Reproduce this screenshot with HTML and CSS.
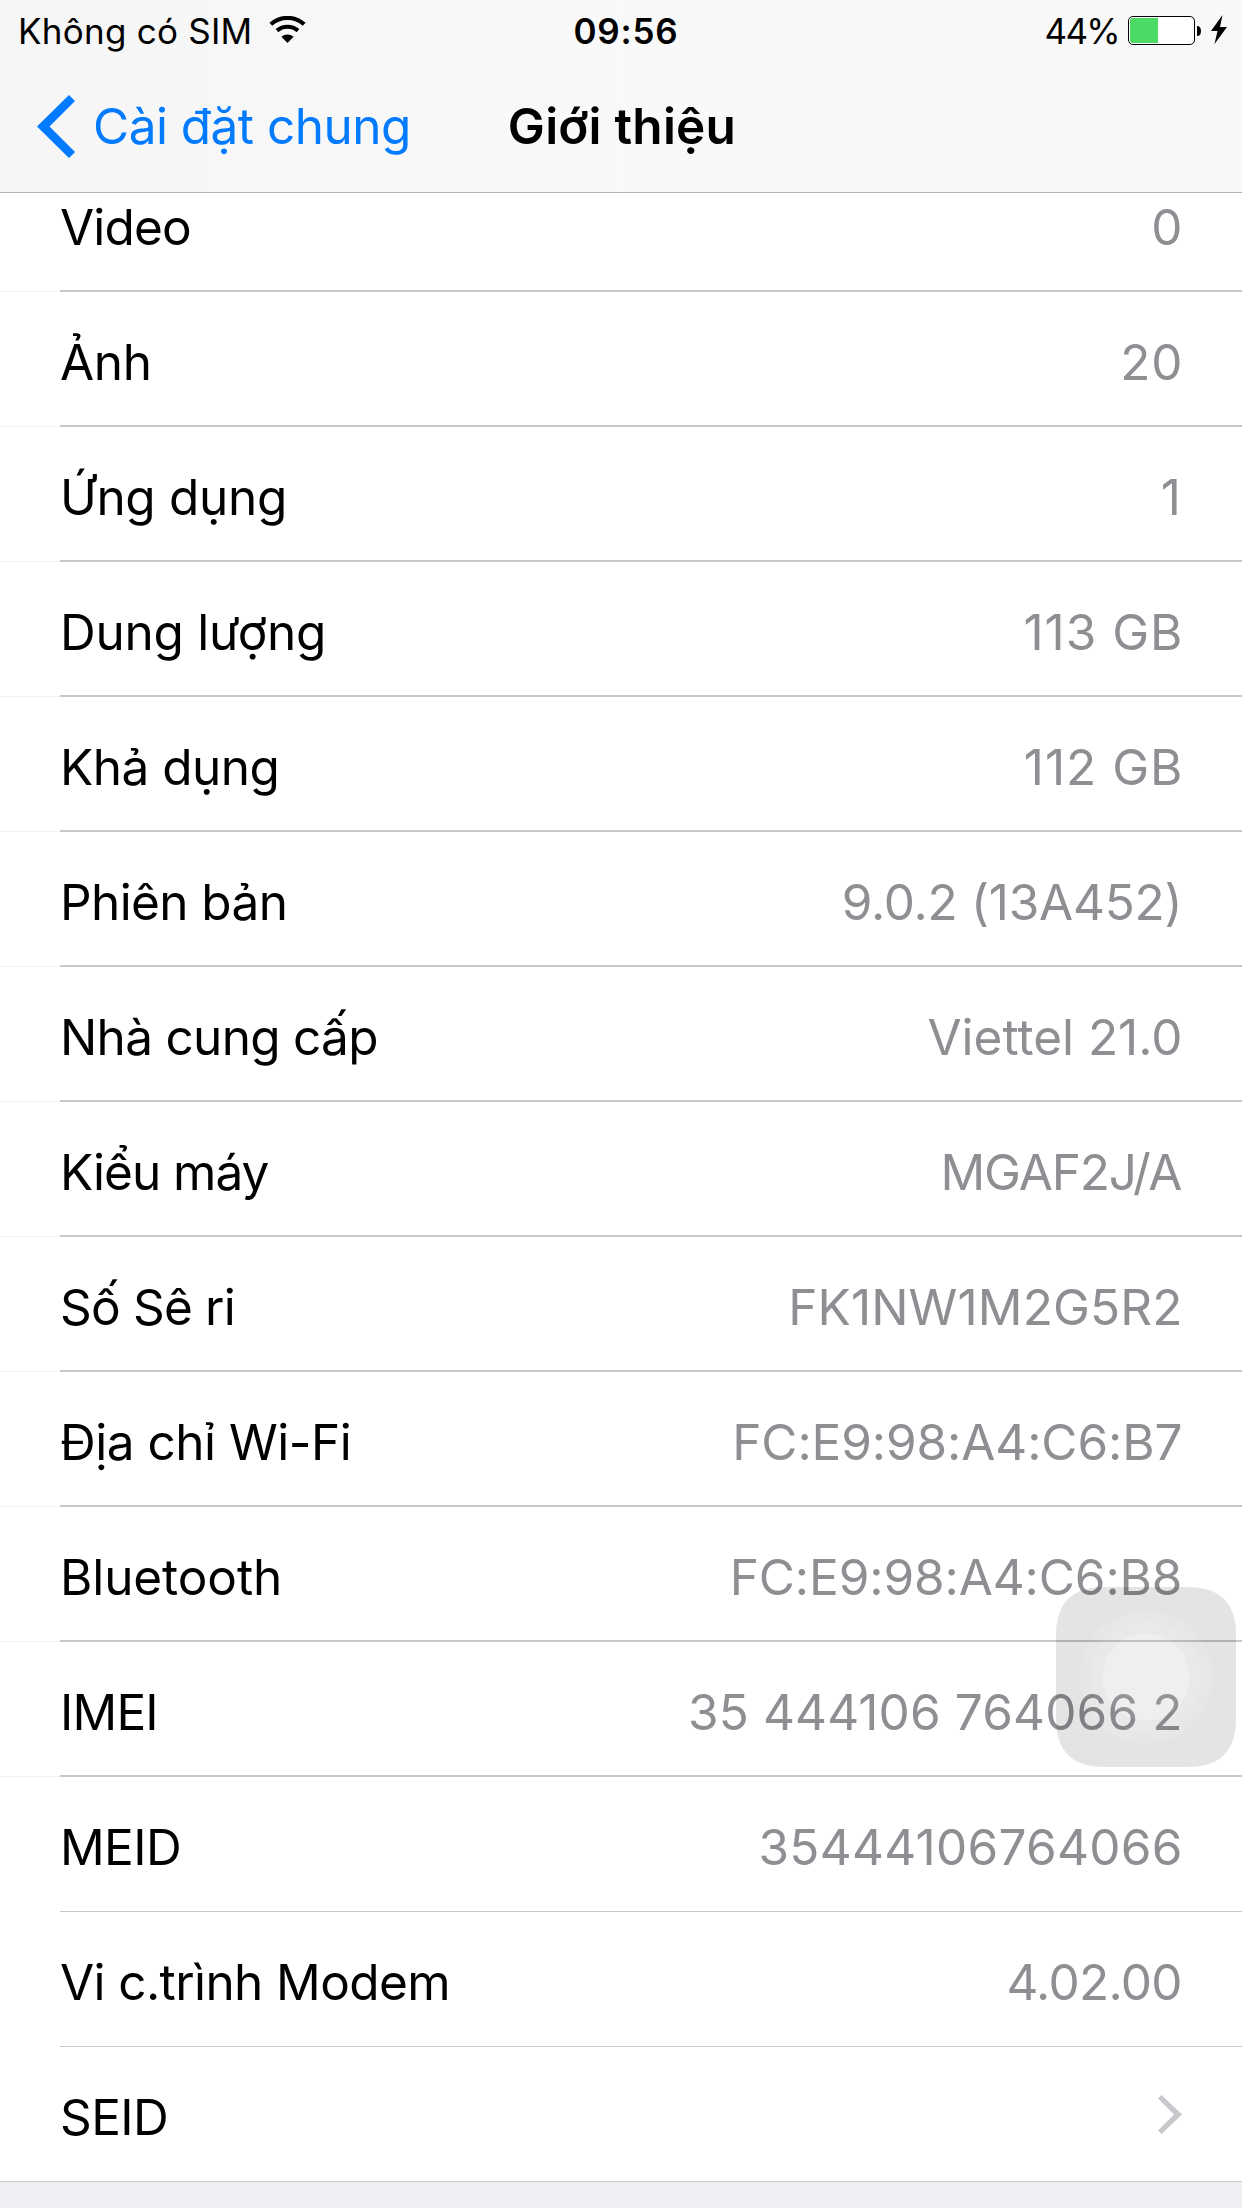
FILE: index.html
```html
<!DOCTYPE html>
<html lang="vi">
<head>
<meta charset="utf-8">
<title>Giới thiệu</title>
<link rel="stylesheet" href="styles.css">
</head>
<body>
<div class="screen">
  <header class="header">
    <div class="status">
      <div class="status-left">
        <span class="carrier">Không có SIM</span>
        <svg class="wifi" viewBox="0 0 38 28" width="38" height="28">
          <path d="M1.8 8.3A25 25 0 0 1 35.2 8.3" fill="none" stroke="#000" stroke-width="4.2"/>
          <path d="M8 14.6A16.2 16.2 0 0 1 29 14.6" fill="none" stroke="#000" stroke-width="4.2"/>
          <path d="M12.4 20.8A9.2 9.2 0 0 1 24.6 20.8L18.5 27Z"/>
        </svg>
      </div>
      <span class="time">09:56</span>
      <div class="status-right">
        <span class="percent">44%</span>
        <svg class="battery" viewBox="0 0 74 29" width="74" height="29">
          <rect x=".5" y=".5" width="66" height="28" rx="4.5" fill="#fff" stroke="#000"/>
          <path d="M5 2H30V27H5A3 3 0 0 1 2 24V5A3 3 0 0 1 5 2Z" fill="#4cd964"/>
          <path d="M69 10C71.800 10 73 12 73 15S71.800 20 69 20Z"/>
        </svg>
        <svg class="bolt" viewBox="0 0 16 29" width="16" height="29">
          <path d="M11.500 0L0 16H6.500L3.500 29L16 12H9Z"/>
        </svg>
      </div>
    </div>
    <nav class="nav">
      <a class="back">
        <svg viewBox="0 0 38 63" width="38" height="63"><path d="M32 0L38 6L12.500 31.500L38 57L32 63L0 31.500Z" fill="#007aff"/></svg>
        <span class="back-label">Cài đặt chung</span>
      </a>
      <h1 class="title">Giới thiệu</h1>
    </nav>
  </header>
  <ul class="list">
    <li class="row row-first"><span class="key t-n8">Video</span><span class="value">0</span></li>
    <li class="row"><span class="key t-n3">Ảnh</span><span class="value t-p7">20</span></li>
    <li class="row"><span class="key t-n3">Ứng dụng</span><span class="value value-one">1</span></li>
    <li class="row"><span class="key t-n2">Dung lượng</span><span class="value t-p10">113 GB</span></li>
    <li class="row"><span class="key t-n5">Khả dụng</span><span class="value t-p10">112 GB</span></li>
    <li class="row"><span class="key t-n6">Phiên bản</span><span class="value t-n2">9.0.2 (13A452)</span></li>
    <li class="row"><span class="key t-n7">Nhà cung cấp</span><span class="value">Viettel 21.0</span></li>
    <li class="row"><span class="key t-n10">Kiểu máy</span><span class="value t-n12">MGAF2J/A</span></li>
    <li class="row"><span class="key t-n8">Số Sê ri</span><span class="value t-p1">FK1NW1M2G5R2</span></li>
    <li class="row"><span class="key t-n5">Địa chỉ Wi-Fi</span><span class="value t-n1">FC:E9:98:A4:C6:B7</span></li>
    <li class="row"><span class="key t-n1">Bluetooth</span><span class="value t-n1">FC:E9:98:A4:C6:B8</span></li>
    <li class="row"><span class="key t-n8">IMEI</span><span class="value t-p1">35 444106 764066 2</span></li>
    <li class="row row-thin"><span class="key t-n6">MEID</span><span class="value t-p3">35444106764066</span></li>
    <li class="row row-thin"><span class="key t-n6">Vi c.trình Modem</span><span class="value t-n7">4.02.00</span></li>
    <li class="row row-last"><span class="key t-n6">SEID</span>
      <svg class="disclosure" viewBox="0 0 24 39" width="24" height="39"><path d="M3.500 0L24 19.500L3.500 39L0 35.500L16 19.500L0 3.500Z" fill="#c7c7cc"/></svg>
    </li>
  </ul>
  <svg class="assistive" viewBox="0 0 180 180" width="180" height="180" fill-rule="evenodd">
    <path d="M48 0H132C164 0 180 16 180 48V132C180 164 164 180 132 180H48C16 180 0 164 0 132V48C0 16 16 0 48 0ZM24 90a66 66 0 1 0 132 0a66 66 0 1 0 -132 0Z" fill="#000" fill-opacity=".106"/>
    <path d="M24 90a66 66 0 1 0 132 0a66 66 0 1 0 -132 0ZM34.500 90a55.500 55.500 0 1 0 111 0a55.500 55.500 0 1 0 -111 0Z" fill="#424242" fill-opacity=".13"/>
    <path d="M34.500 90a55.500 55.500 0 1 0 111 0a55.500 55.500 0 1 0 -111 0ZM46.500 90a43.500 43.500 0 1 0 87 0a43.500 43.500 0 1 0 -87 0Z" fill="#787878" fill-opacity=".16"/>
    <circle cx="90" cy="90" r="43.500" fill="#afafaf" fill-opacity=".2"/>
  </svg>
</div>
</body>
</html>
```
FILE: styles.css
```css
* { box-sizing: border-box; }

body {
  margin: 0;
  background: #efeff4;
  font-family: Inter, "Liberation Sans", sans-serif;
  color: #000;
}

.screen {
  position: relative;
  width: 1242px;
  height: 2208px;
  overflow: hidden;
}

.header {
  height: 193px;
  background: linear-gradient(90deg, #f6f6f6, #f9f9f9 50%, #f8f8f8);
  border-bottom: 1px solid #b2b2b2;
}

.status {
  display: grid;
  grid-template-columns: 1fr auto 1fr;
  height: 60px;
  padding: 0 15px 0 18px;
  font-size: 35px;
  line-height: 62px;
}

.status-left,
.status-right {
  display: flex;
  align-items: flex-start;
}

.status-right { justify-content: flex-end; }
.carrier { letter-spacing: 0.25px; }
.wifi { margin: 16px 0 0 17px; }
.time { font-weight: 600; letter-spacing: 0.8px; padding-left: 7px; }
.percent { letter-spacing: -1.7px; margin-right: 9px; }
.battery { margin-top: 16px; }
.bolt { margin: 15px 0 0 9px; }

.nav {
  display: grid;
  grid-template-columns: 1fr auto 1fr;
  height: 132px;
  padding-left: 37px;
  padding-right: 35px;
  font-size: 49.5px;
  line-height: 132px;
}

.back {
  display: flex;
  align-items: center;
  gap: 18px;
  color: #007aff;
}

.back-label { letter-spacing: -0.52px; }

.title {
  margin: 0;
  font-size: inherit;
  font-weight: 600;
  letter-spacing: 0.24px;
}

.list {
  margin: 0;
  padding: 0;
  list-style: none;
  background: #fff;
}

.row {
  display: flex;
  justify-content: space-between;
  align-items: center;
  height: 135px;
  padding: 6px 60px 0;
  font-size: 49.5px;
  line-height: 129px;
  background:
    linear-gradient(#c7c7cc, #c7c7cc) 60px 100% / 1182px 2px no-repeat,
    linear-gradient(#efeff4, #efeff4) 0 100% / 60px 1px no-repeat;
}

/* Scrolled partly under the header */
.row-first {
  height: 99px;
  padding-top: 0;
  line-height: 69px;
  align-items: flex-start;
}

.row-thin {
  background: linear-gradient(#c7c7cc, #c7c7cc) 60px 100% / 1182px 1px no-repeat;
}

.row-last {
  background: linear-gradient(#c7c7cc, #c7c7cc) 0 100% / 100% 1px no-repeat;
}

.disclosure { margin-bottom: 6px; }

.key, .value {
  --tracking: 0px;
  letter-spacing: var(--tracking);
  white-space: pre;
}

/* The last letter's tracking must not move the right edge */
.value {
  color: #8e8e93;
  margin-right: calc(-0.5px - var(--tracking));
}

.value-one { margin-right: 1px; }

.t-n12 { --tracking: -1.2px; }
.t-n10 { --tracking: -1px; }
.t-n8 { --tracking: -0.8px; }
.t-n7 { --tracking: -0.7px; }
.t-n6 { --tracking: -0.6px; }
.t-n5 { --tracking: -0.5px; }
.t-n3 { --tracking: -0.3px; }
.t-n2 { --tracking: -0.25px; }
.t-n1 { --tracking: -0.1px; }
.t-p1 { --tracking: 0.14px; }
.t-p3 { --tracking: 0.3px; }
.t-p7 { --tracking: 0.7px; }
.t-p10 { --tracking: 1px; }

.assistive {
  position: absolute;
  left: 1056px;
  top: 1587px;
}
```
